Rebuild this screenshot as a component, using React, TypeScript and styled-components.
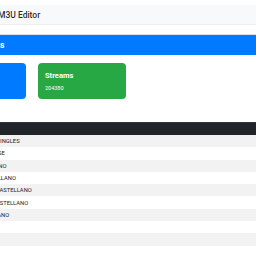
import styled, { createGlobalStyle } from 'styled-components';

const GlobalStyle = createGlobalStyle`
  html, body {
    margin: 0;
    padding: 0;
    background: #fff;
    overflow: hidden;
  }
  body {
    font-family: Roboto, "Liberation Sans", sans-serif;
    color: #212529;
  }
`;

const groups = [
  { id: 1, name: 'SERIES INGLES' },
  { id: 2, name: 'MALTESE' },
  { id: 3, name: 'TOSCANO' },
  { id: 4, name: 'CASTELLANO' },
  { id: 5, name: 'VOSE CASTELLANO' },
  { id: 6, name: 'SUB CASTELLANO' },
  { id: 7, name: 'MEXICANO' },
  { id: 8, name: 'PPV' },
  { id: 9, name: 'USA' },
  { id: 10, name: 'XXX' },
];

export default function App() {
  return (
    <>
      <GlobalStyle />
      <Page>
        <Navbar>
          <Brand>M3U Editor</Brand>
        </Navbar>

        <Card>
          <CardHeader>Playlist Statistics</CardHeader>
          <CardBody>
            <StatCard $bg="#007bff">
              <StatTitle>Groups</StatTitle>
              <StatValue>312</StatValue>
            </StatCard>
            <StatCard $bg="#28a745">
              <StatTitle>Streams</StatTitle>
              <StatValue>204380</StatValue>
            </StatCard>
          </CardBody>
        </Card>

        <Table>
          <HeadRow>
            <NumCell>#</NumCell>
            <NameCell>Group</NameCell>
          </HeadRow>
          {groups.map((g, i) => (
            <Row key={g.id} $striped={i % 2 === 0}>
              <NumCell>{g.id}</NumCell>
              <NameCell>{g.name}</NameCell>
            </Row>
          ))}
        </Table>
      </Page>
    </>
  );
}

const Page = styled.div`
  margin-left: -72px;
  width: calc(100vw + 200px);
  padding-top: 5px;
`;

const Navbar = styled.nav`
  height: 20px;
  background: #f8f9fa;
  border-bottom: 1px solid #eceef0;
  display: flex;
  align-items: center;
  padding-left: 70px;
  box-sizing: border-box;
`;

const Brand = styled.span`
  font-size: 8.5px;
  font-weight: 500;
  color: rgba(0, 0, 0, 0.85);
`;

const Card = styled.div`
  margin: 9px 0 0 0;
  border-top: 1px solid #dcdfe3;
`;

const CardHeader = styled.div`
  height: 20px;
  background: #007bff;
  color: #fff;
  font-size: 8.5px;
  font-weight: 700;
  display: flex;
  align-items: center;
  padding-left: 10px;
`;

const CardBody = styled.div`
  display: flex;
  gap: 12px;
  padding: 8px 10px 23px;
`;

const StatCard = styled.div<{ $bg: string }>`
  width: 88px;
  height: 36px;
  box-sizing: border-box;
  border-radius: 4px;
  background: ${(p) => p.$bg};
  color: #fff;
  padding: 8px 7px;
  display: flex;
  flex-direction: column;
  gap: 5px;
`;

const StatTitle = styled.div`
  font-size: 7.5px;
  font-weight: 700;
  line-height: 9px;
`;

const StatValue = styled.div`
  font-size: 5.5px;
  line-height: 7px;
`;

const Table = styled.div`
  display: flex;
  flex-direction: column;
`;

const HeadRow = styled.div`
  height: 13px;
  box-sizing: border-box;
  display: flex;
  align-items: center;
  background: #212529;
  border-top: 1px solid #32383e;
  color: #fff;
  font-size: 6px;
  font-weight: 700;
`;

const Row = styled.div<{ $striped: boolean }>`
  height: 12.3px;
  display: flex;
  align-items: center;
  background: ${(p) => (p.$striped ? '#f2f2f2' : '#fff')};
  font-size: 5.8px;
  color: #212529;
`;

const NumCell = styled.div`
  width: 52px;
  flex: none;
`;

const NameCell = styled.div`
  flex: 1;
  white-space: nowrap;
`;
